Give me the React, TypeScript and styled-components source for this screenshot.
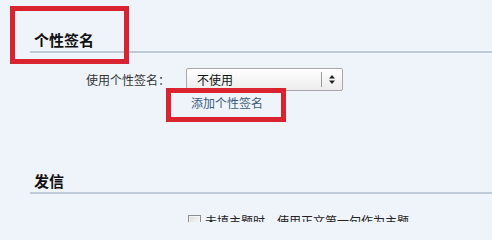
import styled, { createGlobalStyle } from "styled-components";

const GlobalStyle = createGlobalStyle`
  html, body {
    margin: 0;
    padding: 0;
    background: #eff3fa;
  }
  body {
    font-family: "Noto Sans CJK SC", "Liberation Sans", sans-serif;
    font-size: 12px;
    color: #333;
    overflow: hidden;
  }
`;

const Page = styled.div`
  width: 492px;
  height: 222px;
  padding-left: 30px;
  box-sizing: border-box;
  overflow: hidden;
`;

const Section = styled.div<{ $gap?: number }>`
  margin-bottom: ${({ $gap }) => $gap ?? 0}px;
`;

const SectionHeader = styled.div`
  padding: 31px 0 2px 4px;
  border-bottom: 2px solid #bccad8;
`;

const Title = styled.h3`
  margin: 0;
  font-size: 15px;
  line-height: 18px;
  font-weight: bold;
  color: #111;
`;

const Marked = styled.span<{ $t: number; $r: number; $b: number; $l: number }>`
  position: relative;
  display: inline-block;

  &::after {
    content: "";
    position: absolute;
    top: ${({ $t }) => -$t}px;
    right: ${({ $r }) => -$r}px;
    bottom: ${({ $b }) => -$b}px;
    left: ${({ $l }) => -$l}px;
    border: 5px solid #d9232f;
    pointer-events: none;
  }
`;

const FormGrid = styled.div<{ $top: number }>`
  display: grid;
  grid-template-columns: 140px 1fr;
  column-gap: 16px;
  row-gap: 3px;
  margin-top: ${({ $top }) => $top}px;
  align-items: center;
`;

const Label = styled.div`
  text-align: right;
  color: #333;
  line-height: 16px;
`;

const Select = styled.div`
  width: 157px;
  height: 23px;
  box-sizing: border-box;
  border: 1px solid #a8a8a8;
  border-radius: 2px;
  background: linear-gradient(#ffffff, #ececec);
  display: flex;
  align-items: center;
  color: #111;
`;

const SelectValue = styled.span`
  flex: 1;
  padding-left: 10px;
  line-height: 16px;
`;

const SelectArrow = styled.span`
  width: 20px;
  height: 15px;
  border-left: 1px solid #9a9a9a;
  display: flex;
  align-items: center;
  justify-content: center;
`;

const Link = styled.a`
  color: #3c5a80;
  text-decoration: none;
  line-height: 16px;
`;

const Cell = styled.div<{ $indent?: number }>`
  grid-column: 2;
  padding-left: ${({ $indent }) => $indent ?? 0}px;
`;

const Check = styled.label`
  display: flex;
  align-items: center;
  gap: 4px;
  padding-left: 2px;
  line-height: 16px;
  color: #222;
`;

const Box = styled.span`
  width: 11px;
  height: 11px;
  border: 1px solid #8e8e8e;
  background: linear-gradient(135deg, #dcdcdc, #ffffff);
  box-shadow: inset 0 0 0 1px #f4f4f4;
`;

const App = () => {
  return (
    <>
      <GlobalStyle />
      <Page>
        <Section $gap={30}>
          <SectionHeader>
            <Title>
              <Marked $t={25} $r={35} $b={15} $l={24}>
                个性签名
              </Marked>
            </Title>
          </SectionHeader>
          <FormGrid $top={15}>
            <Label>使用个性签名：</Label>
            <Select>
              <SelectValue>不使用</SelectValue>
              <SelectArrow>
                <svg width="6" height="9" viewBox="0 0 6 9">
                  <path d="M3 0 L6 3.5 H0 Z M3 9 L0 5.5 H6 Z" fill="#222" />
                </svg>
              </SelectArrow>
            </Select>
            <Cell $indent={5}>
              <Marked $t={6} $r={23} $b={11} $l={25}>
                <Link href="#">添加个性签名</Link>
              </Marked>
            </Cell>
          </FormGrid>
        </Section>
        <Section>
          <SectionHeader>
            <Title>发信</Title>
          </SectionHeader>
          <FormGrid $top={19}>
            <Cell>
              <Check>
                <Box />
                未填主题时，使用正文第一句作为主题
              </Check>
            </Cell>
          </FormGrid>
        </Section>
      </Page>
    </>
  );
};

export default App;
